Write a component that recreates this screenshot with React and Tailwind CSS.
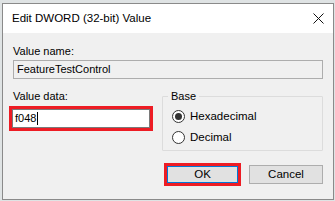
import React from "react";

const font = { fontFamily: '"Liberation Sans", Arial, sans-serif' };

const Radio = ({ checked, label }) => (
  <div className="flex items-center gap-[5px] h-[21px]">
    <span className="w-[13px] h-[13px] rounded-full border border-[#333333] bg-white grid place-items-center">
      {checked && <span className="w-[7px] h-[7px] rounded-full bg-[#333333]" />}
    </span>
    <span className="text-[11.5px] text-black leading-none">{label}</span>
  </div>
);

export default function App() {
  return (
    <div
      className="w-[335px] h-[201px] bg-[#dfe3e4] pl-[2px] pt-[3px] pr-[1px] pb-[1px] overflow-hidden"
      style={font}
    >
      <div className="w-full h-full border border-[#8a8a8a] flex flex-col bg-[#f0f0f0]">
        {/* Title bar */}
        <div className="h-[29px] bg-white flex items-center justify-between pl-[9px] pr-[9px] shrink-0">
          <span className="text-[11.5px] text-black">Edit DWORD (32-bit) Value</span>
          <svg width="11" height="11" viewBox="0 0 11 11">
            <path d="M0.5 0.5 L10.5 10.5 M10.5 0.5 L0.5 10.5" stroke="#111" strokeWidth="1" />
          </svg>
        </div>

        {/* Body */}
        <div className="flex-1 px-[10px] pt-[11px] text-[11px] text-black">
          <div className="leading-[14px]">Value name:</div>
          <div className="mt-[2px] h-[19px] border border-[#adadad] bg-[#f0f0f0] flex items-center px-[3px] text-[11px]">
            FeatureTestControl
          </div>

          <div className="mt-[10px] flex justify-between">
            {/* Value data */}
            <div className="w-[138px]">
              <div className="leading-[14px]">Value data:</div>
              <div className="mt-[3px] -ml-[4px] w-[144px] border-[3px] border-[#ed1c24]">
                <div className="h-[19px] bg-white border border-[#7a7a7a] flex items-center px-[2px]">
                  <span>f048</span>
                  <span className="w-px h-[13px] bg-black ml-[1px]" />
                </div>
              </div>
            </div>

            {/* Base group */}
            <div className="relative w-[161px] h-[55px] mt-[7px] border border-[#dcdcdc] rounded-[1px] pl-[9px] pt-[9px]">
              <span className="absolute -top-[8px] left-[5px] bg-[#f0f0f0] px-[3px] leading-[14px]">Base</span>
              <Radio checked label="Hexadecimal" />
              <Radio label="Decimal" />
            </div>
          </div>

          {/* Buttons */}
          <div className="mt-[12px] flex justify-end gap-[8px]">
            <div className="border-[3px] border-[#ed1c24]">
              <div className="w-[71px] h-[17px] bg-[#e1e1e1] border border-[#0078d7] grid place-items-center text-[11.5px] leading-none">
                OK
              </div>
            </div>
            <div className="mt-[2px] w-[74px] h-[19px] bg-[#e1e1e1] border border-[#adadad] grid place-items-center text-[11.5px] leading-none">
              Cancel
            </div>
          </div>
        </div>
      </div>
    </div>
  );
}
